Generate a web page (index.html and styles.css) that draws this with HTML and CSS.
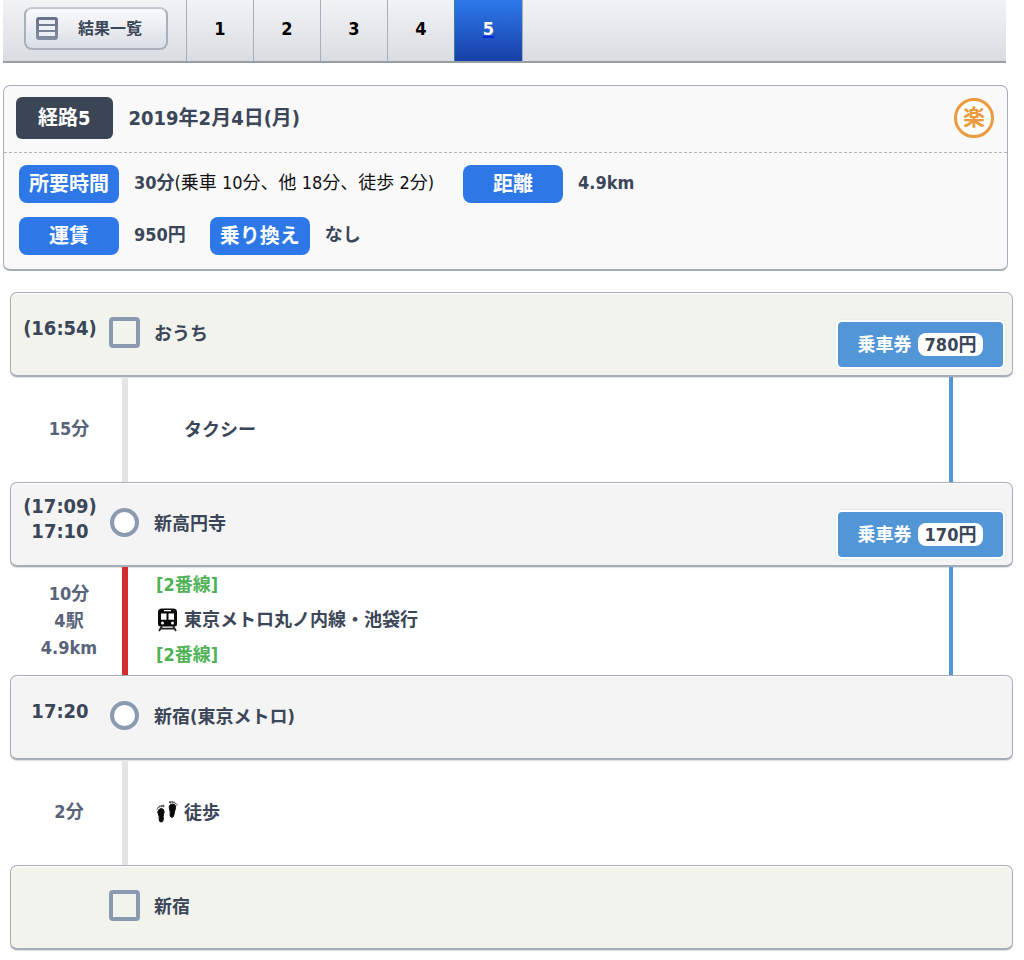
FILE: index.html
```html
<!DOCTYPE html>
<html lang="ja">
<head>
<meta charset="utf-8">
<meta name="viewport" content="width=device-width, initial-scale=1">
<title>経路5 - おうち から 新宿</title>
<link rel="stylesheet" href="styles.css">
</head>
<body>
<nav class="topbar">
  <div class="topbar-list">
    <button class="list-button" type="button">
      <svg class="list-icon" viewBox="0 0 22 23" aria-hidden="true">
        <defs><linearGradient id="lg" x1="0" y1="0" x2="0" y2="1"><stop offset="0" stop-color="#667188"/><stop offset="1" stop-color="#848ea2"/></linearGradient></defs>
        <rect width="22" height="23" rx="3" fill="url(#lg)"/>
        <path d="M3 3h16v4H3zM3 9h16v4H3zM3 15h16v4H3z" fill="#eceff4"/>
      </svg>
      <span>結果一覧</span>
    </button>
  </div>
  <a class="tab" href="#r1">1</a>
  <a class="tab" href="#r2">2</a>
  <a class="tab" href="#r3">3</a>
  <a class="tab" href="#r4">4</a>
  <a class="tab tab-current" href="#r5" aria-current="page">5</a>
</nav>

<section class="summary">
  <header class="summary-head">
    <h1 class="route-no">経路5</h1>
    <span class="date">2019年2月4日(月)</span>
    <span class="easy-mark">楽</span>
  </header>
  <div class="facts">
    <div class="fact-row">
      <span class="label">所要時間</span>
      <span class="value value-time"><b>30分</b>(乗車 10分、他 18分、徒歩 2分)</span>
      <span class="label">距離</span>
      <span class="value"><b>4.9km</b></span>
    </div>
    <div class="fact-row">
      <span class="label">運賃</span>
      <span class="value"><b>950円</b></span>
      <span class="label">乗り換え</span>
      <span class="value"><b>なし</b></span>
    </div>
  </div>
</section>

<main class="route">
  <div class="station station-end">
    <div class="time">(16:54)</div>
    <span class="marker marker-square"></span>
    <div class="name">おうち</div>
    <button class="ticket" type="button">乗車券<span class="price">780円</span></button>
  </div>
  <div class="leg">
    <div class="duration">15分</div>
    <span class="line"></span>
    <div class="detail"><div class="transport"><span class="transport-icon"></span>タクシー</div></div>
    <span class="fare-line"></span>
  </div>
  <div class="station">
    <div class="time">(17:09)<br>17:10</div>
    <span class="marker marker-circle"></span>
    <div class="name">新高円寺</div>
    <button class="ticket" type="button">乗車券<span class="price">170円</span></button>
  </div>
  <div class="leg leg-train">
    <div class="duration">10分<br>4駅<br>4.9km</div>
    <span class="line line-marunouchi"></span>
    <div class="detail">
      <div class="platform">[2番線]</div>
      <div class="transport">
        <svg class="transport-icon" viewBox="0 0 22 24" aria-hidden="true">
          <path d="M6 .5h11q4 0 4 3.500v12q0 2.500-2.500 2.500h-14Q2 18.500 2 16V4Q2 .5 6 .5z" fill="#0a0a0a"/>
          <path d="M8 2h7v1.300H8zM5 5.500h5.500v6.300H5zM12.500 5.500H18v6.300h-5.500z" fill="#fff"/>
          <circle cx="6.500" cy="15" r="1.500" fill="#fff"/><circle cx="16.500" cy="15" r="1.500" fill="#fff"/>
          <path d="M6 18L3 23M17 18l3 5M5 20.700h13" stroke="#222" stroke-width="1.800" fill="none"/>
        </svg>東京メトロ丸ノ内線・池袋行
      </div>
      <div class="platform">[2番線]</div>
    </div>
    <span class="fare-line"></span>
  </div>
  <div class="station">
    <div class="time">17:20</div>
    <span class="marker marker-circle"></span>
    <div class="name">新宿(東京メトロ)</div>
  </div>
  <div class="leg">
    <div class="duration">2分</div>
    <span class="line"></span>
    <div class="detail">
      <div class="transport">
        <svg class="transport-icon" viewBox="0 0 22 24" aria-hidden="true">
          <path d="M3 8.500Q5.500 6.500 7.500 8.500Q8.800 10.500 7.500 13.500Q7 15.500 7.300 18Q7.300 21 5.200 21Q3 21 3.200 18Q3.500 15.500 2.300 13Q1 10.500 3 8.500z" fill="#0a0a0a" stroke="#0a0a0a"/>
          <path d="M14 4Q16.500 2 19 4Q20.300 6 19 9Q18.200 11 18 13.500Q17.600 16.500 15.600 16.300Q13.700 16 14.100 13Q14.500 10.500 13.500 8Q12.700 5.500 14 4z" fill="#0a0a0a" stroke="#0a0a0a"/>
          <g fill="#555"><circle cx="1.300" cy="8" r=".8"/><circle cx="2.300" cy="6.400" r=".8"/><circle cx="3.800" cy="5.500" r=".9"/><circle cx="5.400" cy="5" r=".9"/><circle cx="7.300" cy="5" r="1.200"/><circle cx="14.200" cy="1.300" r="1.200"/><circle cx="16.300" cy="1" r=".9"/><circle cx="18" cy="1.500" r=".9"/><circle cx="19.700" cy="2.500" r=".8"/><circle cx="20.900" cy="4" r=".8"/></g>
        </svg>徒歩
      </div>
    </div>
  </div>
  <div class="station station-end">
    <div class="time"></div>
    <span class="marker marker-square"></span>
    <div class="name">新宿</div>
  </div>
</main>
</body>
</html>
```

FILE: styles.css
```css
* {
  box-sizing: border-box;
}

body {
  margin: 0;
  padding-bottom: 8px;
  background: #fff;
  color: #3b4658;
  font-family: "DejaVu Sans Condensed", "Noto Sans CJK JP", sans-serif;
  font-size: 18px;
  line-height: 26px;
}

button {
  font: inherit;
  color: inherit;
  cursor: pointer;
}

/* Result tabs */
.topbar {
  display: flex;
  height: 63px;
  margin: 0 18px 0 3px;
  border-bottom: 2px solid #979ea9;
  background: linear-gradient(#f2f3f5, #d9dce1);
}

.topbar-list {
  width: 183px;
  padding: 7px 0 0 21px;
}

.list-button {
  display: flex;
  align-items: center;
  gap: 20px;
  width: 144px;
  height: 43px;
  padding: 0 10px;
  border: 2px solid #a9b0bb;
  border-top-color: #c3c9d2;
  border-radius: 8px;
  background: linear-gradient(#f9fafc, #dadee5);
  font-size: 16px;
  font-weight: bold;
  white-space: nowrap;
}

.list-icon {
  width: 22px;
  height: 23px;
  flex: none;
}

.tab {
  width: 67px;
  border-left: 1px solid #a9afba;
  color: #000;
  font-weight: bold;
  line-height: 58px;
  text-align: center;
  text-decoration: none;
}

.tab-current {
  width: 69px;
  border-left-color: #2f7f9f;
  border-right: 1px solid #a9afba;
  background: linear-gradient(#2d79ea, #1840a6);
  color: #fff;
  text-decoration: underline #0b24e0 2px;
}

/* Route summary */
.summary {
  margin: 22px 16px 0 3px;
  border: 1px solid #a5adb9;
  border-bottom-width: 2px;
  border-radius: 7px;
  background: #f9f9f9;
}

.summary-head {
  display: flex;
  align-items: center;
  gap: 16px;
  padding: 11px 13px 13px 12px;
  border-bottom: 1px dashed #b5b5b5;
  font-size: 20px;
  font-weight: bold;
}

.route-no {
  margin: 0;
  padding: 8px 22px;
  border-radius: 6px;
  background: #3b4556;
  color: #fff;
  font-size: 20px;
}

.easy-mark {
  display: flex;
  align-items: center;
  justify-content: center;
  width: 40px;
  height: 40px;
  margin-left: auto;
  border: 3px solid #eb9b3e;
  border-radius: 50%;
  background: #fff;
  color: #eb9b3e;
  font-size: 22px;
}

.facts {
  display: grid;
  gap: 14px;
  padding: 12px 15px 14px;
}

.fact-row {
  display: flex;
  flex-wrap: wrap;
  align-items: center;
}

.label {
  width: 100px;
  margin-right: 15px;
  border-radius: 8px;
  background: #2d77e6;
  color: #fff;
  font-size: 20px;
  font-weight: bold;
  line-height: 38px;
  text-align: center;
}

.value {
  margin-right: 24px;
  padding-bottom: 2px;
  color: #111;
}

.value-time {
  min-width: 305px;
}

.value b {
  color: #3b4658;
}

/* Stations and the legs between them */
.route {
  margin: 21px 11px 0 10px;
  font-weight: bold;
}

.station,
.leg {
  display: grid;
  grid-template-columns: 98px 31px 1fr auto;
}

.station {
  min-height: 85px;
  align-items: center;
  border: 1px solid #a5adb9;
  border-bottom-width: 2px;
  border-radius: 7px;
  background: #f4f4f5;
  box-shadow: inset 0 1px #fff, 0 1px 1px #dcdfe3;
}

.station-end {
  background: #f2f3ec;
}

.time {
  padding-bottom: 11px;
  font-size: 20px;
  line-height: 25px;
  text-align: center;
}

.marker {
  justify-self: center;
  margin-bottom: 4px;
  border: 4px solid #8a9ab0;
}

.marker-square {
  width: 31px;
  height: 31px;
  border-radius: 4px;
}

.marker-circle {
  width: 29px;
  height: 29px;
  border-radius: 50%;
  background: #fff;
}

.name {
  padding-left: 14px;
}

.ticket {
  display: flex;
  align-items: center;
  justify-content: center;
  gap: 6px;
  width: 169px;
  height: 49px;
  align-self: end;
  margin: 0 7px 6px 0;
  padding: 0;
  border: 2px solid #fff;
  border-radius: 6px;
  background: #5296d8;
  color: #fff;
  box-shadow: 0 0 1px 1px #ebebea;
}

.price {
  padding: 0 7px;
  border-radius: 8px;
  background: #fff;
  color: #3b4658;
  line-height: 23px;
}

.leg {
  min-height: 105px;
  padding-left: 1px;
}

.leg-train {
  min-height: 108px;
}

.duration {
  align-self: center;
  padding: 0 0 2px 18px;
  color: #59647a;
  line-height: 27px;
  text-align: center;
}

.line {
  justify-self: center;
  width: 6px;
  background: #e5e5e5;
}

.line-marunouchi {
  background: #d32c2c;
}

.detail {
  align-self: center;
  padding-left: 16px;
  line-height: 35px;
}

.leg-train .detail {
  align-self: start;
}

.platform {
  color: #4fb356;
}

.transport {
  display: flex;
  align-items: center;
  gap: 6px;
}

.transport-icon {
  width: 22px;
  height: 24px;
  flex: none;
}

.fare-line {
  width: 4px;
  margin-right: 60px;
  background: #5296d8;
}
```
